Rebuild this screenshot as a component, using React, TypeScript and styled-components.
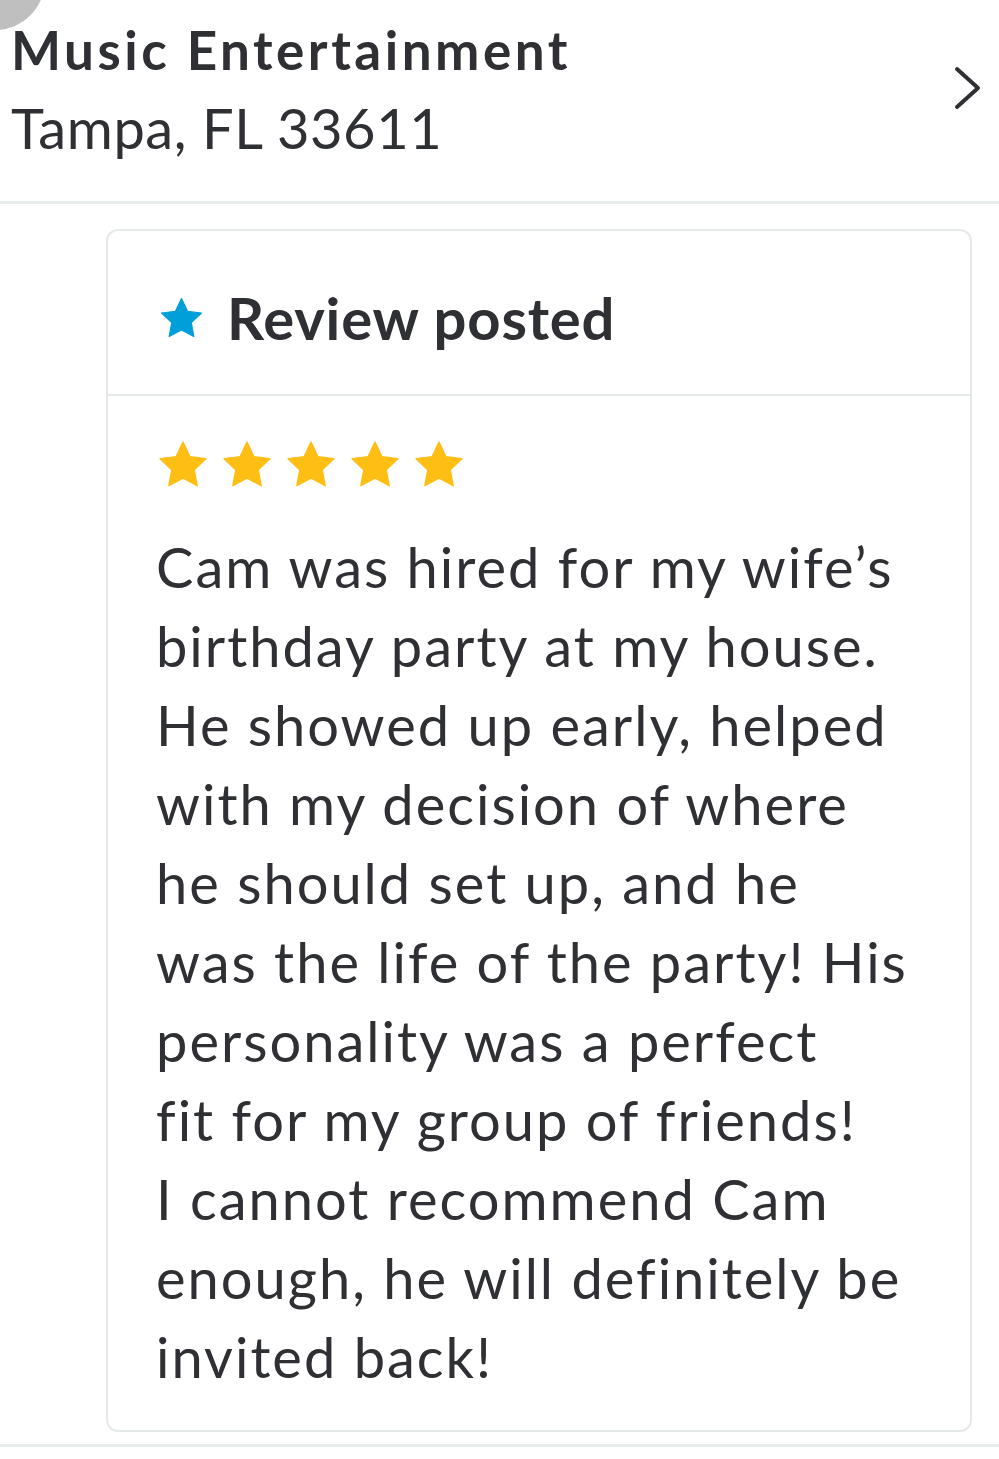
import styled, { createGlobalStyle } from 'styled-components';

const GlobalStyle = createGlobalStyle`
  body {
    margin: 0;
    background: #ffffff;
    font-family: Lato, "Open Sans", sans-serif;
    color: #2f3033;
  }
`;

const Page = styled.div`
  position: relative;
  width: 999px;
  min-height: 1459px;
  overflow: hidden;
`;

const Blob = styled.div`
  position: absolute;
  left: -55px;
  top: -70px;
  width: 100px;
  height: 100px;
  border-radius: 50%;
  background: #bfbfbf;
`;

const ProHeader = styled.header`
  display: flex;
  justify-content: space-between;
  align-items: center;
  padding: 16px 16px 29px 11px;
  border-bottom: solid 3px #e9eced;
`;

const ProInfo = styled.div`
  display: flex;
  flex-direction: column;
`;

const ProName = styled.h1`
  margin: 0;
  font-size: 53px;
  line-height: 68px;
  font-weight: 700;
  letter-spacing: 3.5px;
`;

const ProLocation = styled.div`
  font-size: 56px;
  line-height: 88px;
  font-weight: 400;
  letter-spacing: 0.6px;
`;

const Chevron = styled.svg`
  width: 30px;
  height: 46px;
  margin-bottom: 12px;
`;

const Card = styled.section`
  margin: 25px 27px 0 106px;
  border: solid 2px #e6e9ea;
  border-radius: 12px;
`;

const CardHead = styled.div`
  display: flex;
  align-items: center;
  gap: 22px;
  padding: 52px 52px 41px 50px;
  border-bottom: solid 2px #e6e9ea;
`;

const Heading = styled.h2`
  margin: 0;
  font-size: 58px;
  line-height: 70px;
  font-weight: 700;
  letter-spacing: 0.8px;
`;

const CardBody = styled.div`
  padding: 42px 52px 34px 48px;
`;

const Stars = styled.div`
  display: flex;
  gap: 10px;
  margin-bottom: 35px;
`;

const Star = styled.svg<{ $size: number }>`
  width: ${(p) => p.$size}px;
  height: ${(p) => p.$size}px;
  display: block;
`;

const ReviewText = styled.p`
  margin: 0;
  font-size: 56px;
  line-height: 79px;
  font-weight: 400;
  letter-spacing: 2px;
`;

const Rule = styled.div`
  margin-top: 12px;
  height: 3px;
  background: #e9eced;
`;

const starPath =
  'M12 1.8l3.1 6.5 7.1.9-5.2 4.9 1.3 7.1L12 17.8l-6.3 3.4 1.3-7.1-5.2-4.9 7.1-.9z';

const StarIcon = ({ color, size }: { color: string; size: number }) => (
  <Star $size={size} viewBox="0 0 24 24">
    <path d={starPath} fill={color} stroke={color} strokeWidth="0.6" strokeLinejoin="round" />
  </Star>
);

const lines = [
  'Cam was hired for my wife’s',
  'birthday party at my house.',
  'He showed up early, helped',
  'with my decision of where',
  'he should set up, and he',
  'was the life of the party! His',
  'personality was a perfect',
  'fit for my group of friends!',
  'I cannot recommend Cam',
  'enough, he will definitely be',
  'invited back!',
];

const App = () => {
  return (
    <Page>
      <GlobalStyle />
      <Blob />
      <ProHeader>
        <ProInfo>
          <ProName>Music Entertainment</ProName>
          <ProLocation>Tampa, FL 33611</ProLocation>
        </ProInfo>
        <Chevron viewBox="0 0 30 46">
          <polyline
            points="4,4 25,23 4,42"
            fill="none"
            stroke="#2f3033"
            strokeWidth="4"
            strokeLinecap="round"
            strokeLinejoin="round"
          />
        </Chevron>
      </ProHeader>
      <Card>
        <CardHead>
          <StarIcon color="#009fd9" size={47} />
          <Heading>Review posted</Heading>
        </CardHead>
        <CardBody>
          <Stars>
            {[0, 1, 2, 3, 4].map((i) => (
              <StarIcon key={i} color="#febe14" size={54} />
            ))}
          </Stars>
          <ReviewText>
            {lines.map((line, i) => (
              <span key={i}>
                {line}
                {i < lines.length - 1 && <br />}
              </span>
            ))}
          </ReviewText>
        </CardBody>
      </Card>
      <Rule />
    </Page>
  );
};

export default App;
